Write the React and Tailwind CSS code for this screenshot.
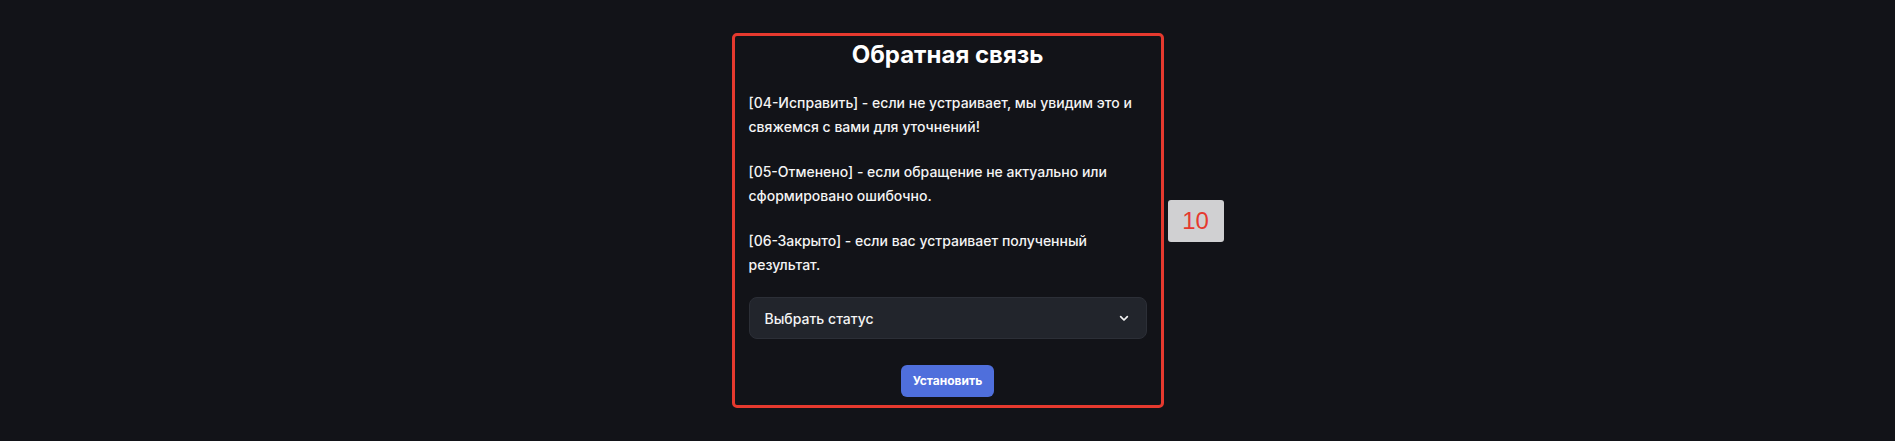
import React from "react";

export default function App() {
  return (
    <div
      className="w-full h-screen bg-[#121318] flex items-center justify-center"
      style={{ fontFamily: "Inter, 'Noto Sans', sans-serif" }}
    >
      <div className="relative w-[432px] h-[375px] border-[3px] border-[#e5392e] rounded-[5px] px-[14px] pt-[3px] flex flex-col">
        <h1 className="text-center text-[24px] leading-[32px] font-bold text-white">
          Обратная связь
        </h1>
        <div className="mt-[20px] flex flex-col gap-[21px] text-[14px] leading-[24px] font-medium text-[#f4f4f4]">
          <p>[04-Исправить] - если не устраивает, мы увидим это и свяжемся с вами для уточнений!</p>
          <p>[05-Отменено] - если обращение не актуально или сформировано ошибочно.</p>
          <p>[06-Закрыто] - если вас устраивает полученный результат.</p>
        </div>
        <div className="mt-[20px] h-[42px] rounded-[8px] bg-[#22252c] border border-[#2c2f37] flex items-center justify-between pl-[15px] pr-[14px]">
          <span className="text-[14px] font-medium text-[#f4f4f4]">Выбрать статус</span>
          <svg width="16" height="16" viewBox="0 0 24 24" fill="none" stroke="#f2f2f2" strokeWidth="2.6" strokeLinecap="round" strokeLinejoin="round">
            <path d="M7 10l5 5 5-5" />
          </svg>
        </div>
        <div className="mt-[26px] flex justify-center">
          <button className="h-[32px] px-[12px] rounded-[6px] bg-[#4f6fdc] text-white text-[12px] font-bold">
            Установить
          </button>
        </div>
        <div
          className="absolute left-full top-1/2 -translate-y-1/2 ml-[7px] w-[56px] h-[42px] rounded-[3px] bg-[#d0d0d2] flex items-center justify-center text-[24px] text-[#e5392e]"
          style={{ fontFamily: "'Liberation Sans', Arial, sans-serif" }}
        >
          10
        </div>
      </div>
    </div>
  );
}
